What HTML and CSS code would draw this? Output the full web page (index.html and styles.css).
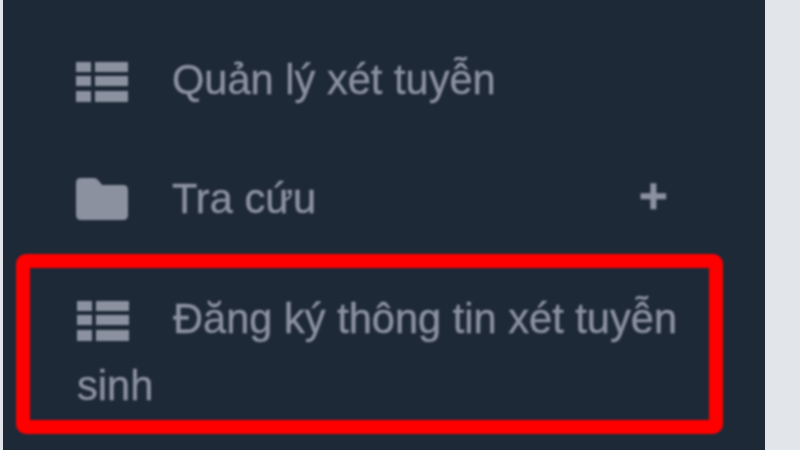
FILE: index.html
```html
<!DOCTYPE html>
<html lang="vi">
<head>
  <meta charset="UTF-8" />
  <title>Đăng ký thông tin xét tuyễn sinh</title>
  <link rel="stylesheet" href="styles.css">
</head>
<body>
  <nav class="sidebar">
    <a class="nav-item" href="#">
      <svg class="nav-icon" viewBox="0 0 52 40"><path d="M0 0h15v10H0zM19 0h33v10H19zM0 14h15v10H0zM19 14h33v10H19zM0 29h15v11H0zM19 29h33v11H19z"/></svg>Quản lý xét tuyễn
    </a>
    <a class="nav-item has-sub" href="#">
      <svg class="nav-icon folder" viewBox="0 0 52 42"><path d="M5 0h13q3 0 5 3l3 4h21q5 0 5 5v25q0 5-5 5H5q-5 0-5-5V5q0-5 5-5z"/></svg>Tra cứu
      <span class="nav-plus">+</span>
    </a>
    <a class="nav-item highlighted" href="#">
      <svg class="nav-icon" viewBox="0 0 52 40"><path d="M0 0h15v10H0zM19 0h33v10H19zM0 14h15v10H0zM19 14h33v10H19zM0 29h15v11H0zM19 29h33v11H19z"/></svg>Đăng ký thông tin xét tuyễn sinh
    </a>
  </nav>
</body>
</html>
```

FILE: styles.css
```css
:root {
  --side-bg: #1e2938;
  --side-text: #8b919f;
  --page-bg: #e2e5e9;
  --mark-red: #ff0000;
}
*, *::before, *::after {
  box-sizing: border-box;
}
html, body {
  height: 100%;
}
body {
  margin: 0;
  height: 450px;
  overflow: hidden;
  background: var(--page-bg);
  font-family: "Liberation Sans", Arial, sans-serif;
}
.sidebar {
  width: 762px;
  height: 450px;
  margin-left: 3px;
  padding-top: 21px;
  background: var(--side-bg);
}
.nav-item {
  position: relative;
  display: block;
  padding: 25px 70px 27px 73px;
  font-size: 41.6px;
  line-height: 67px;
  color: var(--side-text);
  text-decoration: none;
  -webkit-text-stroke: 0.4px var(--side-text);
  filter: blur(0.9px);
}
.nav-icon {
  display: inline-block;
  width: 52px;
  height: 40px;
  margin-right: 44px;
  vertical-align: -8px;
  fill: var(--side-text);
}
.folder {
  height: 42px;
  vertical-align: -7px;
}
.nav-plus {
  position: absolute;
  top: 23px;
  right: 97px;
  font-size: 50px;
  font-weight: 700;
}
.highlighted {
  margin: -5px 42px 0 13px;
  padding: 17px 0 1px 47px;
  border: 14px solid var(--mark-red);
  border-radius: 10px;
}
```
